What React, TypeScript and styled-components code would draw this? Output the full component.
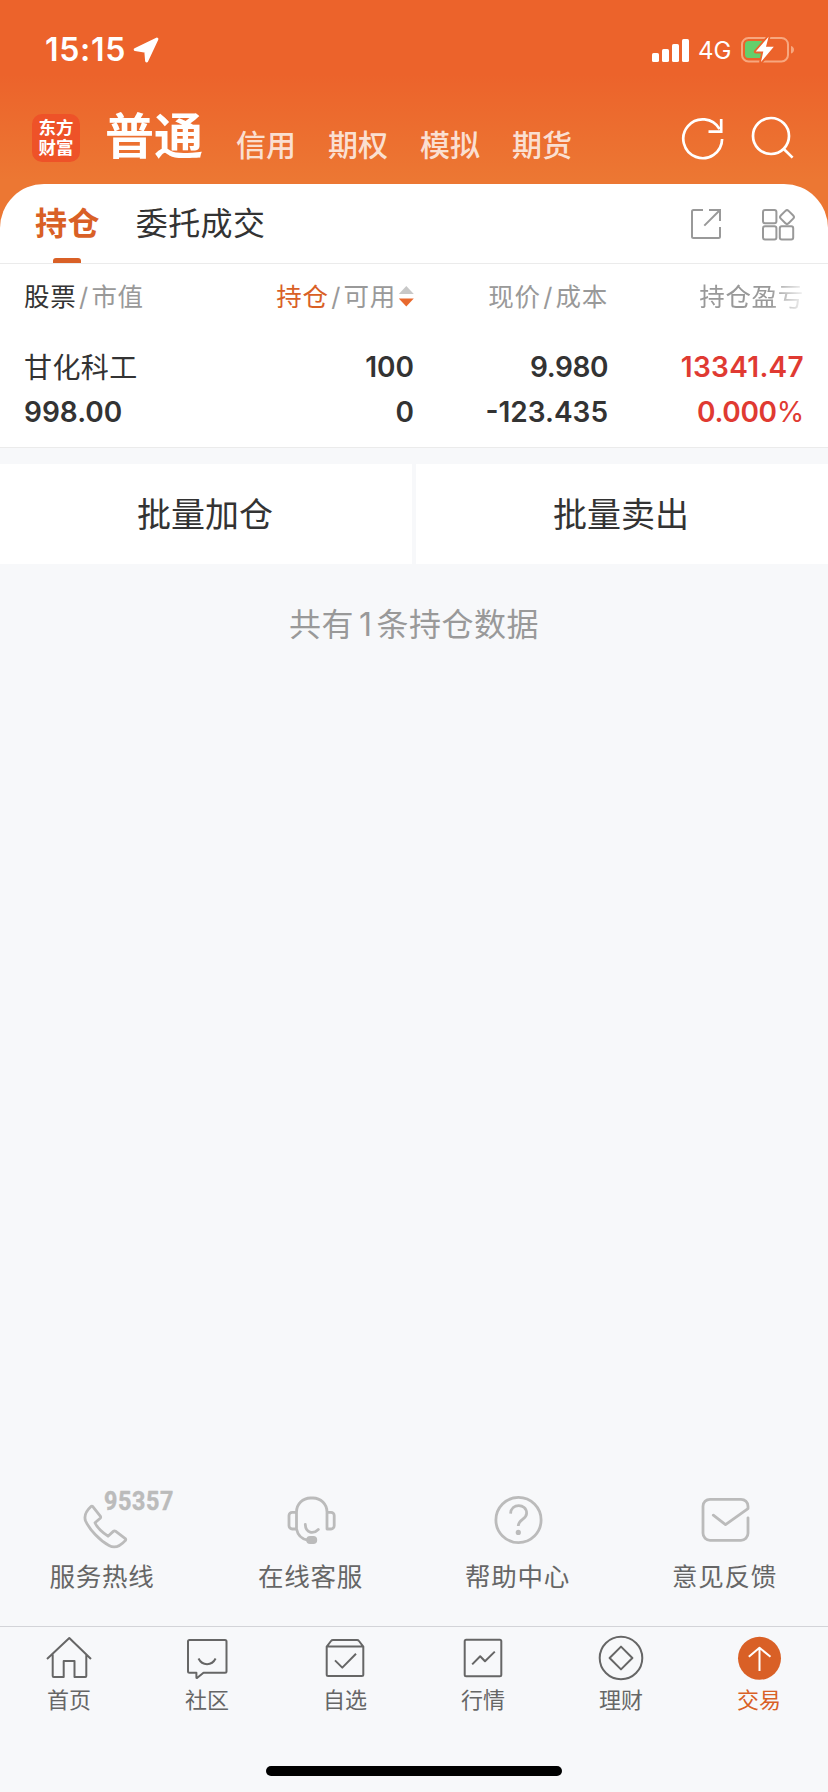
import React from 'react';
import styled, { createGlobalStyle } from 'styled-components';

const color = {
  accent: '#d96026',
  ink: '#333333',
  muted: '#999999',
  label: '#666666',
  faint: '#bbbbbb',
  page: '#f7f8fa',
  rise: '#e03a32',
};

const GlobalStyle = createGlobalStyle`
  * { box-sizing: border-box; }
  body {
    margin: 0;
    background: ${color.page};
    color: ${color.ink};
    font-family: Inter, "Noto Sans CJK SC", sans-serif;
  }
  svg { display: block; flex: none; }
`;

const Screen = styled.div`
  width: 828px;
  height: 1792px;
  display: flex;
  flex-direction: column;
  overflow: hidden;
  background: ${color.page};
`;

const Hero = styled.header`
  background: linear-gradient(#ec632b 0, #ec632b 74px, #ec7733 180px);
`;

const StatusBar = styled.div`
  height: 100px;
  padding: 0 32px 0 45px;
  display: flex;
  align-items: center;
`;

const Clock = styled.span`
  width: 87px;
  font-size: 32px;
  font-weight: 600;
  line-height: 40px;
  letter-spacing: 0.7px;
  color: #fff;
`;

const StatusRight = styled.div`
  margin-left: auto;
  display: flex;
  align-items: center;
`;

const Network = styled.span`
  margin: 2px 8.5px 0 8px;
  font-size: 24px;
  font-weight: 400;
  line-height: 30px;
  color: #fff;
`;

const NavBar = styled.nav`
  height: 84px;
  padding: 0 32px;
  display: flex;
  align-items: flex-start;
`;

const Logo = styled.div`
  width: 48px;
  height: 48px;
  margin-top: 14px;
  padding-top: 4px;
  border-radius: 10px;
  background: #ee5228;
  color: #fff;
  font-size: 17.5px;
  font-weight: 700;
  line-height: 20px;
  text-align: center;
`;

const NavTitle = styled.span`
  margin: 7px 0 0 25px;
  width: 131px;
  font-size: 49px;
  font-weight: 700;
  line-height: 60px;
  color: #fff;
`;

const NavLink = styled.span`
  margin-top: 25px;
  width: 92px;
  font-size: 30px;
  font-weight: 500;
  line-height: 40px;
  color: rgba(255, 255, 255, 0.8);
`;

const NavIcons = styled.div`
  margin: 16px 0 0 auto;
  display: flex;
  gap: 24px;
`;

const Sheet = styled.section`
  background: #fff;
  border-radius: 44px 44px 0 0;
`;

const TabRow = styled.div`
  height: 80px;
  padding: 0 32px 0 35px;
  display: flex;
  border-bottom: 1px solid #ebebeb;
`;

const Tab = styled.div<{ $active?: boolean }>`
  margin-right: 36px;
  display: flex;
  flex-direction: column;
  align-items: center;
  justify-content: space-between;
  font-size: 32px;
  letter-spacing: 0.4px;
  line-height: 80px;
  font-weight: ${(p) => (p.$active ? 700 : 400)};
  color: ${(p) => (p.$active ? color.accent : color.ink)};
`;

const TabLabel = styled.span`
  height: 74px;
`;

const Underline = styled.i`
  width: 28px;
  height: 5px;
  border-radius: 3px 3px 0 0;
  background: ${color.accent};
`;

const TabTools = styled.div`
  margin: 22px 0 0 auto;
  display: flex;
  gap: 36px;
`;

const Holdings = styled.section`
  padding: 0 24px 12px;
  display: grid;
  grid-template-columns: 170px 220px 194px 196px;
  border-bottom: 1px solid #ebebeb;
  background: #fff;
`;

const HeadCell = styled.div<{ $left?: boolean; $fade?: boolean }>`
  height: 81px;
  padding-top: 12px;
  display: flex;
  justify-content: ${(p) => (p.$left ? 'flex-start' : 'flex-end')};
  font-size: 25.5px;
  letter-spacing: 0.7px;
  line-height: 41px;
  color: ${color.muted};
  ${(p) => p.$fade && 'mask-image: linear-gradient(to right, #000 162px, transparent 200px);'}
`;

const HeadMain = styled.span<{ $accent?: boolean }>`
  color: ${(p) => (p.$accent ? color.accent : color.ink)};
`;

const Slash = styled.span`
  width: 15px;
  text-align: center;
`;

const Cell = styled.div<{ $left?: boolean; $rise?: boolean; $tracking?: number }>`
  text-align: ${(p) => (p.$left ? 'left' : 'right')};
  font-size: 28px;
  font-weight: 600;
  line-height: 45px;
  letter-spacing: ${(p) => p.$tracking ?? 0}px;
  color: ${(p) => (p.$rise ? color.rise : color.ink)};
`;

const Percent = styled.span`
  font-weight: 400;
`;

const StockName = styled(Cell)`
  height: 45px;
  font-weight: 400;
  line-height: 47px;
`;

const Actions = styled.div`
  margin-top: 16px;
  display: grid;
  grid-template-columns: 1fr 1fr;
  gap: 4px;
`;

const Action = styled.button`
  height: 100px;
  padding: 1px 2px 0 0;
  border: 0;
  background: #fff;
  color: ${color.ink};
  font: 34px/99px Inter, "Noto Sans CJK SC", sans-serif;
`;

const Summary = styled.p`
  margin: 40px 0 0;
  text-align: center;
  font-size: 32px;
  line-height: 41px;
  letter-spacing: 0.5px;
  color: ${color.muted};
`;

const Count = styled.span`
  margin: 0 4px 0 5px;
`;

const Services = styled.div`
  margin-top: auto;
  height: 136px;
  display: grid;
  grid-template-columns: repeat(4, 1fr);
`;

const Service = styled.div`
  display: flex;
  flex-direction: column;
  align-items: center;
  gap: 7px;
  font-size: 25.5px;
  line-height: 40px;
  letter-spacing: 0.7px;
  color: ${color.label};
`;

const ServiceLabel = styled.span`
  ${Service}:first-child & {
    padding-right: 3px;
  }
`;

const ServiceGlyph = styled.svg`
  fill: none;
  stroke: ${color.faint};
  stroke-width: 2.8;
  stroke-linecap: round;
  stroke-linejoin: round;
  overflow: visible;
`;

const TabBar = styled.nav`
  height: 140px;
  padding-top: 6px;
  display: grid;
  grid-template-columns: repeat(6, 1fr);
  border-top: 1px solid #d3d4d8;
`;

const TabItem = styled.div<{ $active?: boolean }>`
  display: flex;
  flex-direction: column;
  align-items: center;
  gap: 4px;
  font-size: 22px;
  line-height: 31px;
  color: ${(p) => (p.$active ? color.accent : color.label)};
`;

const TabGlyph = styled.svg`
  fill: none;
  stroke: currentColor;
  stroke-width: 2;
  stroke-linejoin: round;
`;

const HomeArea = styled.div`
  height: 26px;
`;

const HomeIndicator = styled.div`
  width: 296px;
  height: 10px;
  margin: 0 auto;
  border-radius: 5px;
  background: #000;
`;

const services = [
  {
    label: '服务热线',
    art: (
      <>
        <path d="M37 16.5Q37.8 15.6 38.8 16.6L46.5 26.4Q47 27.4 46.2 28.2L41 32.8Q44 39.5 54 46.2L59.3 41.4Q60.3 40.5 61.5 41.2L71.3 48.6Q72.3 49.6 71.2 50.6C65.5 57 60.5 58.6 55 55.5C45.5 50.5 35.5 39.5 31.6 31C29.6 25.5 31.5 21.5 37 16.5Z" />
        <text
          x="50"
          y="20"
          textLength="70"
          lengthAdjust="spacingAndGlyphs"
          fontFamily="Roboto"
          fontWeight="700"
          fontSize="25.5"
          fill={color.faint}
          strokeWidth="0.5"
        >
          95357
        </text>
      </>
    ),
  },
  {
    label: '在线客服',
    art: (
      <>
        <path d="M35.5 39V22A14 14 0 0 1 49.5 8H52A14 14 0 0 1 66 22V39H70A3.2 3.2 0 0 0 73.2 35.8V25.5A3.2 3.2 0 0 0 70 22.3H66M35.5 22.3H31.2A3.2 3.2 0 0 0 28 25.5V35.8A3.2 3.2 0 0 0 31.2 39H35.5Q37.5 48.5 46.5 50" />
        <path d="M44.3 34.5C44.7 43.5 52.5 44.3 57.3 39.4" />
        <rect x="46.6" y="47.5" width="8.2" height="5" rx="2.5" fill={color.faint} />
      </>
    ),
  },
  {
    label: '帮助中心',
    art: (
      <>
        <circle cx="50.5" cy="30" r="22.6" />
        <path d="M42.6 23.6C43 12.8 58.6 13.2 58.6 23.2C58.6 29.5 50.3 29.3 50.3 36" strokeLinecap="butt" />
        <circle cx="50.3" cy="42.4" r="2.6" fill={color.faint} stroke="none" />
      </>
    ),
  },
  {
    label: '意见反馈',
    art: (
      <path d="M73 27.8V43.3A7 7 0 0 1 66 50.3H35A7 7 0 0 1 28 43.3V16.3A7 7 0 0 1 35 9.3H66A7 7 0 0 1 73 16.3V18.6L50.5 34.6L38.3 25.2" />
    ),
  },
];

const tabs = [
  {
    label: '首页',
    art: <path d="M2 26L24.3 5L46 26M7.7 21.5V43Q7.7 44 8.7 44H18.7V28H29.5V44H40.3Q41.3 44 41.3 43V21.5" />,
  },
  {
    label: '社区',
    art: (
      <>
        <path d="M6.5 7H42Q43.5 7 43.5 8.5V38.2Q43.5 39.7 42 39.7H20.5L14 45Q13.4 45 13.4 44.4V39.7H6.5Q5 39.7 5 38.2V8.5Q5 7 6.5 7Z" />
        <path d="M15.5 25.5C19.3 33 28.8 33 32.6 25.5" />
      </>
    ),
  },
  {
    label: '自选',
    art: (
      <>
        <path d="M5.7 13.6L10 8Q10.8 7 12 7H36Q37.3 7 38 8L42.3 13.6V41.5Q42.3 43 40.8 43H7.2Q5.7 43 5.7 41.5ZM5.7 13.6H42.3" />
        <path d="M14 27.4L21.3 34.6L35 20.8" />
      </>
    ),
  },
  {
    label: '行情',
    art: (
      <>
        <rect x="5.7" y="6.8" width="36.6" height="36.4" rx="1.5" />
        <path d="M13.2 31.4L21.2 23.2L26 28.3L35.8 18.6" />
      </>
    ),
  },
  {
    label: '理财',
    art: (
      <>
        <circle cx="24" cy="25" r="21.3" />
        <path d="M24 13.6L35.4 25L24 36.4L12.6 25Z" />
      </>
    ),
  },
  {
    label: '交易',
    active: true,
    art: (
      <>
        <circle cx="24.5" cy="25.3" r="21.5" fill={color.accent} stroke="none" />
        <path d="M24.5 15V38M13.8 23.8L24.5 14.8L35.5 23.8" stroke="#fff" />
      </>
    ),
  },
];

export default function App() {
  return (
    <Screen>
      <GlobalStyle />
      <Hero>
        <StatusBar>
          <Clock>15:15</Clock>
          <svg width="28" height="28" viewBox="0 0 28 28">
            <path
              d="M24.9 3L3.2 13.6L13.8 15.2L14.6 25Z"
              fill="#fff"
              stroke="#fff"
              strokeWidth="3"
              strokeLinejoin="round"
            />
          </svg>
          <StatusRight>
            <svg width="38" height="26" viewBox="0 0 38 26" fill="#fff">
              <rect x="0" y="16" width="7" height="9" rx="1.6" />
              <rect x="10" y="12" width="7" height="13" rx="1.6" />
              <rect x="20" y="7" width="7" height="18" rx="1.6" />
              <rect x="30" y="2" width="7" height="23" rx="1.6" />
            </svg>
            <Network>4G</Network>
            <svg width="56" height="30" viewBox="0 0 56 30">
              <rect x="2" y="3" width="46" height="23.4" rx="6.5" fill="none" stroke="#f7a77f" strokeWidth="2" />
              <path d="M51 11Q54 12 54 14.7T51 18.5Z" fill="#f7a77f" />
              <path d="M8.5 6H22V23H8.5Q5 23 5 19.5V9.5Q5 6 8.5 6Z" fill="#65cf6b" />
              <path
                d="M28.6 1.8L15.7 16.6H23.3L21 27L33.8 11.8H26Z"
                fill="#fff"
                stroke="#ec632b"
                strokeWidth="3.6"
                strokeLinejoin="round"
                paintOrder="stroke"
              />
            </svg>
          </StatusRight>
        </StatusBar>
        <NavBar>
          <Logo>
            东方
            <br />
            财富
          </Logo>
          <NavTitle>普通</NavTitle>
          <NavLink>信用</NavLink>
          <NavLink>期权</NavLink>
          <NavLink>模拟</NavLink>
          <NavLink>期货</NavLink>
          <NavIcons>
            <svg width="46" height="46" viewBox="0 0 46 46" fill="none" stroke="#fff" strokeWidth="2.7">
              <path d="M42.1 23A19.4 19.4 0 1 1 39.6 13.2M41.2 3V15.6H28.5" />
            </svg>
            <svg width="46" height="46" viewBox="0 0 46 46" fill="none" stroke="#fff" strokeWidth="2.7">
              <circle cx="21" cy="20" r="18" />
              <path d="M33.5 32.8L42.6 41.6" />
            </svg>
          </NavIcons>
        </NavBar>
        <Sheet>
          <TabRow>
            <Tab $active>
              <TabLabel>持仓</TabLabel>
              <Underline />
            </Tab>
            <Tab>
              <TabLabel>委托成交</TabLabel>
            </Tab>
            <TabTools>
              <svg width="36" height="36" viewBox="0 0 36 36" fill="none" stroke={color.muted} strokeWidth="2">
                <path d="M15 4H5.5Q4 4 4 5.5V30.5Q4 32 5.5 32H30.5Q32 32 32 30.5V21M21 4H32V15M32 4L16.3 19.6" />
              </svg>
              <svg width="36" height="36" viewBox="0 0 36 36" fill="none" stroke={color.muted} strokeWidth="2">
                <rect x="3" y="4" width="13.4" height="13.2" rx="2" />
                <rect x="3" y="20.2" width="13.4" height="13.2" rx="2" />
                <rect x="19.8" y="20.2" width="13.4" height="13.2" rx="2" />
                <rect x="21.5" y="5.6" width="11" height="11" rx="2.2" transform="rotate(45 27 11.1)" />
              </svg>
            </TabTools>
          </TabRow>
        </Sheet>
      </Hero>
      <Holdings>
        <HeadCell $left>
          <HeadMain>股票</HeadMain>
          <Slash>/</Slash>
          市值
        </HeadCell>
        <HeadCell>
          <HeadMain $accent>持仓</HeadMain>
          <Slash>/</Slash>
          可用
          <svg width="18" height="40" viewBox="0 0 18 40">
            <path d="M10.3 10L17.8 18H2.8Z" fill="#c8c8c8" />
            <path d="M2.8 22.5H17.8L10.3 30.5Z" fill="#e8692e" />
          </svg>
        </HeadCell>
        <HeadCell>
          现价
          <Slash>/</Slash>
          成本
        </HeadCell>
        <HeadCell $fade>持仓盈亏</HeadCell>
        <StockName $left $tracking={0.4}>
          甘化科工
        </StockName>
        <Cell>100</Cell>
        <Cell $tracking={-0.4}>9.980</Cell>
        <Cell $rise $tracking={0.3}>
          13341.47
        </Cell>
        <Cell $left>998.00</Cell>
        <Cell>0</Cell>
        <Cell>-123.435</Cell>
        <Cell $rise $tracking={-0.3}>
          0.000<Percent>%</Percent>
        </Cell>
      </Holdings>
      <Actions>
        <Action>批量加仓</Action>
        <Action>批量卖出</Action>
      </Actions>
      <Summary>
        共有<Count>1</Count>条持仓数据
      </Summary>
      <Services>
        {services.map((s) => (
          <Service key={s.label}>
            <ServiceGlyph width="100" height="60" viewBox="0 0 100 60">
              {s.art}
            </ServiceGlyph>
            <ServiceLabel>{s.label}</ServiceLabel>
          </Service>
        ))}
      </Services>
      <TabBar>
        {tabs.map((t) => (
          <TabItem key={t.label} $active={t.active}>
            <TabGlyph width="48" height="48" viewBox="0 0 48 48">
              {t.art}
            </TabGlyph>
            {t.label}
          </TabItem>
        ))}
      </TabBar>
      <HomeArea>
        <HomeIndicator />
      </HomeArea>
    </Screen>
  );
}
